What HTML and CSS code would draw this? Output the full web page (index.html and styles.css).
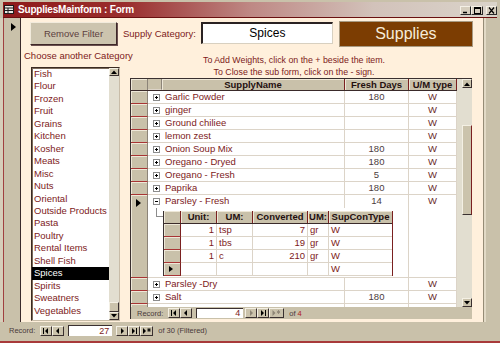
FILE: index.html
```html
<!DOCTYPE html>
<html lang="en">
<head>
  <meta charset="utf-8">
  <title>SuppliesMainform : Form</title>
  <link rel="stylesheet" href="styles.css">
</head>
<body>
  <div class="window">
    <div class="titlebar">
      <svg class="title-icon" width="10" height="9" viewBox="0 0 10 9">
        <rect x="0.5" y="0.5" width="9" height="8" fill="#ecebe6" stroke="#1c1c1c"/>
        <path d="M1 3h8M1 5.5h8M4 3v5" stroke="#1c1c1c"/>
      </svg>
      <span class="title">SuppliesMainform : Form</span>
      <div class="title-buttons">
        <span class="tbtn"><svg width="9" height="7"><path d="M2 5.5h4" stroke="#000" stroke-width="1.5"/></svg></span>
        <span class="tbtn tbtn-max"><svg width="10" height="7"><rect x="2.5" y="0.5" width="6" height="6" fill="none" stroke="#000"/><path d="M2 1.5h7" stroke="#000"/></svg></span>
        <span class="tbtn tbtn-close"><svg width="9" height="7"><path d="M2 0.5l5 6M7 0.5l-5 6" stroke="#000" stroke-width="1.2"/></svg></span>
      </div>
    </div>

    <div class="body">
      <div class="record-strip"><span class="pointer"></span></div>

      <div class="form">
        <div class="top-row">
          <button type="button" class="btn">Remove Filter</button>
          <span class="label">Supply Category:</span>
          <div class="textbox">Spices</div>
          <div class="banner">Supplies</div>
        </div>

        <div class="main-row">
          <div class="category">
            <div class="caption">Choose another Category</div>
            <div class="listbox">
              <ul class="items">
                <li>Fish</li>
                <li>Flour</li>
                <li>Frozen</li>
                <li>Fruit</li>
                <li>Grains</li>
                <li>Kitchen</li>
                <li>Kosher</li>
                <li>Meats</li>
                <li>Misc</li>
                <li>Nuts</li>
                <li>Oriental</li>
                <li>Outside Products</li>
                <li>Pasta</li>
                <li>Poultry</li>
                <li>Rental Items</li>
                <li>Shell Fish</li>
                <li class="selected">Spices</li>
                <li>Spirits</li>
                <li>Sweatners</li>
                <li>Vegetables</li>
              </ul>
              <div class="scroll scroll-list">
                <span class="sbtn"><svg width="6" height="4"><use href="#arrow-up"/></svg></span>
                <span class="thumb thumb-list"></span>
                <span class="sbtn"><svg width="6" height="4"><use href="#arrow-down"/></svg></span>
              </div>
            </div>
          </div>

          <div class="supplies">
            <p class="hint">To Add Weights, click on the + beside the item.<br>To Close the sub form, click on the - sign.</p>
            <div class="subform">
              <div class="sheet-wrap">
                <div class="sheet">
                  <div class="row head">
                    <span class="sel"></span><span class="exp"></span>
                    <span class="hcell">SupplyName</span><span class="hcell">Fresh Days</span><span class="hcell">U/M type</span>
                  </div>
                  <div class="row">
                    <span class="sel"></span><span class="exp"><svg class="box"><use href="#plus"/></svg></span>
                    <span class="cell name">Garlic Powder</span><span class="cell num">180</span><span class="cell um">W</span>
                  </div>
                  <div class="row">
                    <span class="sel"></span><span class="exp"><svg class="box"><use href="#plus"/></svg></span>
                    <span class="cell name">ginger</span><span class="cell num"></span><span class="cell um">W</span>
                  </div>
                  <div class="row">
                    <span class="sel"></span><span class="exp"><svg class="box"><use href="#plus"/></svg></span>
                    <span class="cell name">Ground chiliee</span><span class="cell num"></span><span class="cell um">W</span>
                  </div>
                  <div class="row">
                    <span class="sel"></span><span class="exp"><svg class="box"><use href="#plus"/></svg></span>
                    <span class="cell name">lemon zest</span><span class="cell num"></span><span class="cell um">W</span>
                  </div>
                  <div class="row">
                    <span class="sel"></span><span class="exp"><svg class="box"><use href="#plus"/></svg></span>
                    <span class="cell name">Onion Soup Mix</span><span class="cell num">180</span><span class="cell um">W</span>
                  </div>
                  <div class="row">
                    <span class="sel"></span><span class="exp"><svg class="box"><use href="#plus"/></svg></span>
                    <span class="cell name">Oregano - Dryed</span><span class="cell num">180</span><span class="cell um">W</span>
                  </div>
                  <div class="row">
                    <span class="sel"></span><span class="exp"><svg class="box"><use href="#plus"/></svg></span>
                    <span class="cell name">Oregano - Fresh</span><span class="cell num">5</span><span class="cell um">W</span>
                  </div>
                  <div class="row">
                    <span class="sel"></span><span class="exp"><svg class="box"><use href="#plus"/></svg></span>
                    <span class="cell name">Paprika</span><span class="cell num">180</span><span class="cell um">W</span>
                  </div>

                  <div class="expanded">
                    <span class="sel sel-current"><span class="pointer"></span></span>
                    <div class="expanded-body">
                      <div class="row-cells">
                        <span class="exp"><svg class="box"><use href="#minus"/></svg></span>
                        <span class="cell name">Parsley - Fresh</span><span class="cell num">14</span><span class="cell um">W</span>
                      </div>
                      <div class="subarea">
                        <span class="connector"></span>
                        <div class="subsheet">
                          <div class="srow shead">
                            <span class="ssel"></span>
                            <span class="shcell">Unit:</span><span class="shcell">UM:</span><span class="shcell">Converted</span><span class="shcell">UM:</span><span class="shcell">SupConType</span>
                          </div>
                          <div class="srow">
                            <span class="ssel"></span>
                            <span class="scell right">1</span><span class="scell">tsp</span><span class="scell right">7</span><span class="scell">gr</span><span class="scell">W</span>
                          </div>
                          <div class="srow">
                            <span class="ssel"></span>
                            <span class="scell right">1</span><span class="scell">tbs</span><span class="scell right">19</span><span class="scell">gr</span><span class="scell">W</span>
                          </div>
                          <div class="srow">
                            <span class="ssel"></span>
                            <span class="scell right">1</span><span class="scell">c</span><span class="scell right">210</span><span class="scell">gr</span><span class="scell">W</span>
                          </div>
                          <div class="srow">
                            <span class="ssel"><span class="pointer pointer-small"></span></span>
                            <span class="scell"></span><span class="scell"></span><span class="scell"></span><span class="scell"></span><span class="scell">W</span>
                          </div>
                        </div>
                        <span class="subgap"></span>
                        <span class="subum"></span>
                      </div>
                    </div>
                  </div>

                  <div class="row">
                    <span class="sel"></span><span class="exp"><svg class="box"><use href="#plus"/></svg></span>
                    <span class="cell name">Parsley -Dry</span><span class="cell num"></span><span class="cell um">W</span>
                  </div>
                  <div class="row">
                    <span class="sel"></span><span class="exp"><svg class="box"><use href="#plus"/></svg></span>
                    <span class="cell name">Salt</span><span class="cell num">180</span><span class="cell um">W</span>
                  </div>
                  <div class="row">
                    <span class="sel"></span><span class="exp"></span>
                    <span class="cell name"></span><span class="cell num"></span><span class="cell um"></span>
                  </div>
                </div>

                <div class="scroll scroll-sheet">
                  <span class="sbtn"><svg width="6" height="4"><use href="#arrow-up"/></svg></span>
                  <span class="thumb thumb-sheet"></span>
                  <span class="sbtn"><svg width="6" height="4"><use href="#arrow-down"/></svg></span>
                </div>
              </div>

              <div class="nav nav-sub">
                <span class="nav-label">Record:</span>
                <span class="nbtn nbtn-first"><svg width="10" height="8"><use href="#nav-first"/></svg></span>
                <span class="nbtn"><svg width="10" height="8"><use href="#nav-prev"/></svg></span>
                <span class="nav-box">4</span>
                <span class="nbtn nbtn-next off"><svg width="10" height="8"><use href="#nav-next"/></svg></span>
                <span class="nbtn"><svg width="10" height="8"><use href="#nav-last"/></svg></span>
                <span class="nbtn nbtn-new off"><svg width="13" height="8"><use href="#nav-new"/></svg></span>
                <span class="nav-of">of <b>4</b></span>
              </div>
            </div>
          </div>
        </div>
      </div>

      <div class="side-strip"></div>
    </div>

    <div class="nav nav-main">
      <span class="nav-label">Record:</span>
      <span class="nbtn nbtn-first"><svg width="10" height="8"><use href="#nav-first"/></svg></span>
      <span class="nbtn"><svg width="10" height="8"><use href="#nav-prev"/></svg></span>
      <span class="nav-box">27</span>
      <span class="nbtn nbtn-next"><svg width="10" height="8"><use href="#nav-next"/></svg></span>
      <span class="nbtn"><svg width="10" height="8"><use href="#nav-last"/></svg></span>
      <span class="nbtn nbtn-new"><svg width="10" height="8"><use href="#nav-new"/></svg></span>
      <span class="nav-of">of 30 (Filtered)</span>
    </div>
  </div>

  <svg class="defs" width="0" height="0">
    <symbol id="plus" viewBox="0 0 7 7">
      <rect x="0.5" y="0.5" width="6" height="6" fill="#fff" stroke="#8c8c8c"/>
      <path d="M2 3.5h3M3.5 2v3" stroke="#000"/>
    </symbol>
    <symbol id="minus" viewBox="0 0 7 7">
      <rect x="0.5" y="0.5" width="6" height="6" fill="#fff" stroke="#8c8c8c"/>
      <path d="M2 3.5h3" stroke="#000"/>
    </symbol>
    <symbol id="arrow-up" viewBox="0 0 6 4"><path d="M0 4L3 0.5L6 4z"/></symbol>
    <symbol id="arrow-down" viewBox="0 0 6 4"><path d="M0 0L3 3.5L6 0z"/></symbol>
    <symbol id="nav-first" viewBox="0 0 10 8"><path d="M2 1h1v6H2zM7 1v6L4 4z"/></symbol>
    <symbol id="nav-prev" viewBox="0 0 10 8"><path d="M6 1v6L3 4z"/></symbol>
    <symbol id="nav-next" viewBox="0 0 10 8"><path d="M4 1v6l3-3z"/></symbol>
    <symbol id="nav-last" viewBox="0 0 10 8"><path d="M3 1v6l3-3zM7 1h1v6H7z"/></symbol>
    <symbol id="nav-new" viewBox="0 0 10 8"><path d="M1 1v6l3-3z"/><path d="M7 1v4M5.3 2l3.4 2M8.7 2L5.3 4" stroke="currentColor" stroke-width="0.9" fill="none"/></symbol>
  </svg>
</body>
</html>
```

FILE: styles.css
```css
*, *::before, *::after {
  margin: 0;
  padding: 0;
  box-sizing: border-box;
}

body {
  width: 500px;
  height: 343px;
  overflow: hidden;
  background-color: #C9C1AA;
  color: #7D1A1A;
  font-family: "Liberation Sans", Arial, sans-serif;
  font-size: 9.5px;
}

.defs {
  display: block;
  width: 0;
  height: 0;
  overflow: hidden;
}

.window {
  display: flex;
  flex-direction: column;
  width: 500px;
  height: 343px;
  background-color: #C9C1AA;
  border-bottom: 2px solid #A83A3A;
}

/* title bar */

.titlebar {
  display: flex;
  align-items: center;
  height: 16px;
  margin: 2px 3px 0;
  border-bottom: 1px solid #6A1010;
  background: linear-gradient(to right, #8E1A1A, #9A2E2E 25%, #BE8884 50%, #D2C2BA 75%, #DAD4CA);
}

.title-icon {
  margin-left: 1px;
}

.title {
  margin-left: 4px;
  color: #FFFFFF;
  font-size: 10px;
  font-weight: 700;
  letter-spacing: -0.2px;
}

.title-buttons {
  display: flex;
  margin-left: auto;
  margin-top: 2px;
}

.tbtn {
  display: flex;
  align-items: center;
  justify-content: center;
  width: 11px;
  height: 9px;
  border: 1px solid #2A2A2A;
  border-top-color: #F4F0E6;
  border-left-color: #F4F0E6;
  background-color: #D6CEBE;
}

.tbtn-max {
  width: 12px;
}

.tbtn-close {
  margin-left: 3px;
}

/* body */

.body {
  display: flex;
  height: 304px;
}

.record-strip {
  width: 21px;
  padding: 5px 0 0 11px;
  border-right: 1px solid #3A2A2A;
  box-shadow: inset 3px 0 #D6CEBA, inset 4px 0 #A04040;
}

.pointer {
  display: block;
  width: 0;
  height: 0;
  border-top: 4px solid transparent;
  border-bottom: 4px solid transparent;
  border-left: 5px solid #000000;
}

.pointer-small {
  border-top-width: 3.5px;
  border-bottom-width: 3.5px;
  border-left-width: 4px;
}

.form {
  display: flex;
  flex-direction: column;
  width: 462px;
  background-color: #FFF0DC;
}

.side-strip {
  flex: 1;
  box-shadow: inset 1px 0 #968C76, inset 3px 0 #E2DAC6;
}

/* top controls */

.top-row {
  display: flex;
  align-items: flex-start;
  height: 32px;
  padding: 3px 0 0 9px;
}

.btn {
  width: 87px;
  height: 23px;
  margin-top: 1px;
  border: 1px solid #3E2828;
  border-top-color: #F2EBDC;
  border-left-color: #F2EBDC;
  box-shadow: 1px 1px #6A5050;
  background-color: #CCC4AE;
  color: #5C4040;
  font-family: inherit;
  font-size: 9.5px;
}

.label {
  margin: 1px 0 0 6px;
  line-height: 23px;
}

.textbox {
  width: 132px;
  height: 22px;
  margin: 1px 0 0 5px;
  border: 2px solid #2A2222;
  border-right: 1px solid #D8D0C0;
  border-bottom: 1px solid #D8D0C0;
  background-color: #FFFFFF;
  color: #000000;
  font-size: 12px;
  line-height: 19px;
  text-align: center;
}

.banner {
  width: 134px;
  height: 26px;
  margin-left: 6px;
  border: 1px solid #A89A82;
  background-color: #7C3D02;
  color: #F6ECDA;
  font-size: 16px;
  line-height: 24px;
  text-align: center;
}

/* main area */

.main-row {
  display: flex;
  flex: 1;
}

.category {
  width: 109px;
}

.caption {
  padding-left: 3px;
  line-height: 12px;
  white-space: nowrap;
}

.listbox {
  display: flex;
  width: 89px;
  height: 254px;
  margin: 5px 0 0 10px;
  border: 1px solid #C8BCA8;
  border-top-color: #3A2A22;
  border-left: 1px solid #3A2A22;
  box-shadow: inset 1px 1px #7A6A5A;
  background-color: #FFFFFF;
}

.items {
  flex: 1;
  padding-top: 0;
  list-style: none;
}

.items li {
  padding-left: 2px;
  line-height: 12.45px;
  white-space: nowrap;
}

.items .selected {
  background-color: #000000;
  color: #FFFFFF;
}

.scroll {
  display: flex;
  flex-direction: column;
  align-items: flex-end;
  background-color: #E2DED0;
}

.scroll-list {
  width: 10px;
}

.scroll-sheet {
  width: 15px;
}

.sbtn,
.thumb {
  display: flex;
  align-items: center;
  justify-content: center;
  width: 10px;
  height: 9px;
  border: 1px solid #3A3030;
  border-top-color: #F4F0E4;
  border-left-color: #F4F0E4;
  background-color: #CBC3AC;
}

.scroll-list .sbtn {
  height: 8px;
}

.scroll-list .sbtn:last-child,
.scroll-sheet .sbtn:last-child {
  margin-top: auto;
}

.thumb-list {
  height: 10px;
  margin-top: auto;
}

.thumb-sheet {
  height: 90px;
  margin-top: 37px;
  border-right-color: #7A2020;
}

.scroll-list .thumb-list + .sbtn {
  margin-top: 0;
}

.supplies {
  width: 353px;
}

.hint {
  width: 328px;
  margin-top: 5px;
  font-size: 8.8px;
  line-height: 11.5px;
  text-align: center;
}

/* datasheet subform */

.subform {
  width: 342px;
  height: 241px;
  border-top: 1px solid #3A3030;
  border-left: 1px solid #3A3030;
}

.sheet-wrap {
  display: flex;
  height: 228px;
}

.sheet {
  width: 326px;
  overflow: hidden;
  background-color: #FFFFFF;
}

.row {
  display: grid;
  grid-template-columns: 17px 14px 183px 64px 48px;
  height: 13px;
}

.row.head {
  height: 12px;
  background-color: #C9C1AA;
  border-bottom: 1px solid #3A2A2A;
}

.hcell {
  border-right: 1px solid #7A2020;
  box-shadow: inset 1px 1px #EEE8D8;
  color: #241010;
  font-weight: 700;
  line-height: 11px;
  text-align: center;
}

.head .exp {
  border-right: 1px solid #8C8478;
}

.sel {
  border-right: 1px solid #8C8478;
  border-bottom: 1px solid #A83434;
  box-shadow: inset 1px 1px #EEE8D8;
  background-color: #C9C1AA;
}

.head .sel {
  border-bottom: 0;
}

.sel-current {
  padding: 4px 0 0 5px;
}

.exp {
  display: flex;
  align-items: center;
  padding-left: 5px;
  border-bottom: 1px solid #DCD4C8;
}

.box {
  width: 7px;
  height: 7px;
}

.cell {
  padding: 0 3px;
  border-right: 1px solid #DCD4C8;
  border-bottom: 1px solid #DCD4C8;
  line-height: 12px;
  white-space: nowrap;
}

.num {
  color: #4C3C3C;
  text-align: center;
}

.um {
  color: #6A2A2A;
  text-align: center;
}

.expanded {
  display: grid;
  grid-template-columns: 17px 309px;
}

.expanded .sel {
  border-bottom-color: #A83434;
}

.row-cells {
  display: grid;
  grid-template-columns: 14px 183px 64px 48px;
  height: 13px;
}

.row-cells .exp {
  border-bottom: 0;
}

.row-cells .cell {
  border-bottom: 0;
}

.subarea {
  display: flex;
  height: 70px;
  border-bottom: 1px solid #DCD4C8;
}

.connector {
  width: 7px;
  height: 9px;
  margin-left: 8px;
  border-left: 1px solid #8C8C8C;
  border-bottom: 1px solid #8C8C8C;
}

.subsheet {
  width: 230px;
  height: 65px;
  margin-top: 3px;
  border-left: 1px solid #3A3030;
  border-right: 1px solid #7A2020;
}

.srow {
  display: grid;
  grid-template-columns: 17px 36px 36px 55px 21px 63px;
  height: 13px;
}

.shead {
  border-bottom: 1px solid #3A2A2A;
  background-color: #C9C1AA;
}

.shcell {
  border-right: 1px solid #7A2020;
  box-shadow: inset 1px 1px #EEE8D8;
  color: #241010;
  font-weight: 700;
  line-height: 12px;
  text-align: center;
}

.shcell:last-child {
  border-right: 0;
}

.ssel {
  display: flex;
  align-items: center;
  padding-left: 5px;
  border-right: 1px solid #7A2020;
  border-bottom: 1px solid #A83434;
  box-shadow: inset 1px 1px #EEE8D8;
  background-color: #C9C1AA;
}

.shead .ssel {
  border-bottom: 0;
}

.scell {
  padding: 0 2px;
  border-right: 1px solid #DCD4C8;
  border-bottom: 1px solid #DCD4C8;
  line-height: 12px;
  white-space: nowrap;
}

.scell:last-child {
  border-right: 0;
}

.right {
  text-align: right;
}

.subgap {
  width: 15px;
}

.subum {
  width: 49px;
  border-left: 1px solid #DCD4C8;
  border-right: 1px solid #DCD4C8;
}

/* record navigation */

.nav {
  display: flex;
  align-items: center;
  color: #4A3A3A;
  font-size: 7.5px;
}

.nav-main {
  height: 19px;
  padding: 0 0 2px 9px;
}

.nav-sub {
  height: 12px;
  padding-left: 6px;
  background-color: #C9C1AA;
}

.nav-label {
  margin-right: 5px;
}

.nbtn {
  display: flex;
  align-items: center;
  justify-content: center;
  width: 12px;
  height: 10px;
  border: 1px solid #3A3030;
  border-top-color: #F4F0E4;
  border-left-color: #F4F0E4;
  background-color: #CBC3AC;
  color: #000000;
}

.nbtn svg {
  fill: currentColor;
}

.nbtn-new {
  width: 13px;
}

.nav-sub .nbtn-new {
  width: 15px;
}

.nbtn.off {
  color: #8E8676;
}

.nav-box {
  width: 44px;
  height: 11px;
  margin: 0 4px;
  padding-right: 3px;
  border-top: 1px solid #3A3030;
  border-left: 1px solid #3A3030;
  background-color: #FFFFFF;
  color: #7D1A1A;
  font-size: 9px;
  line-height: 10px;
  text-align: right;
}

.nav-sub .nav-box {
  width: 47px;
  height: 10px;
  margin: 0 2px 0 4px;
  line-height: 9px;
}

.nav-of {
  margin-left: 5px;
}

.nav-of b {
  color: #B02020;
  font-weight: 400;
}
```
